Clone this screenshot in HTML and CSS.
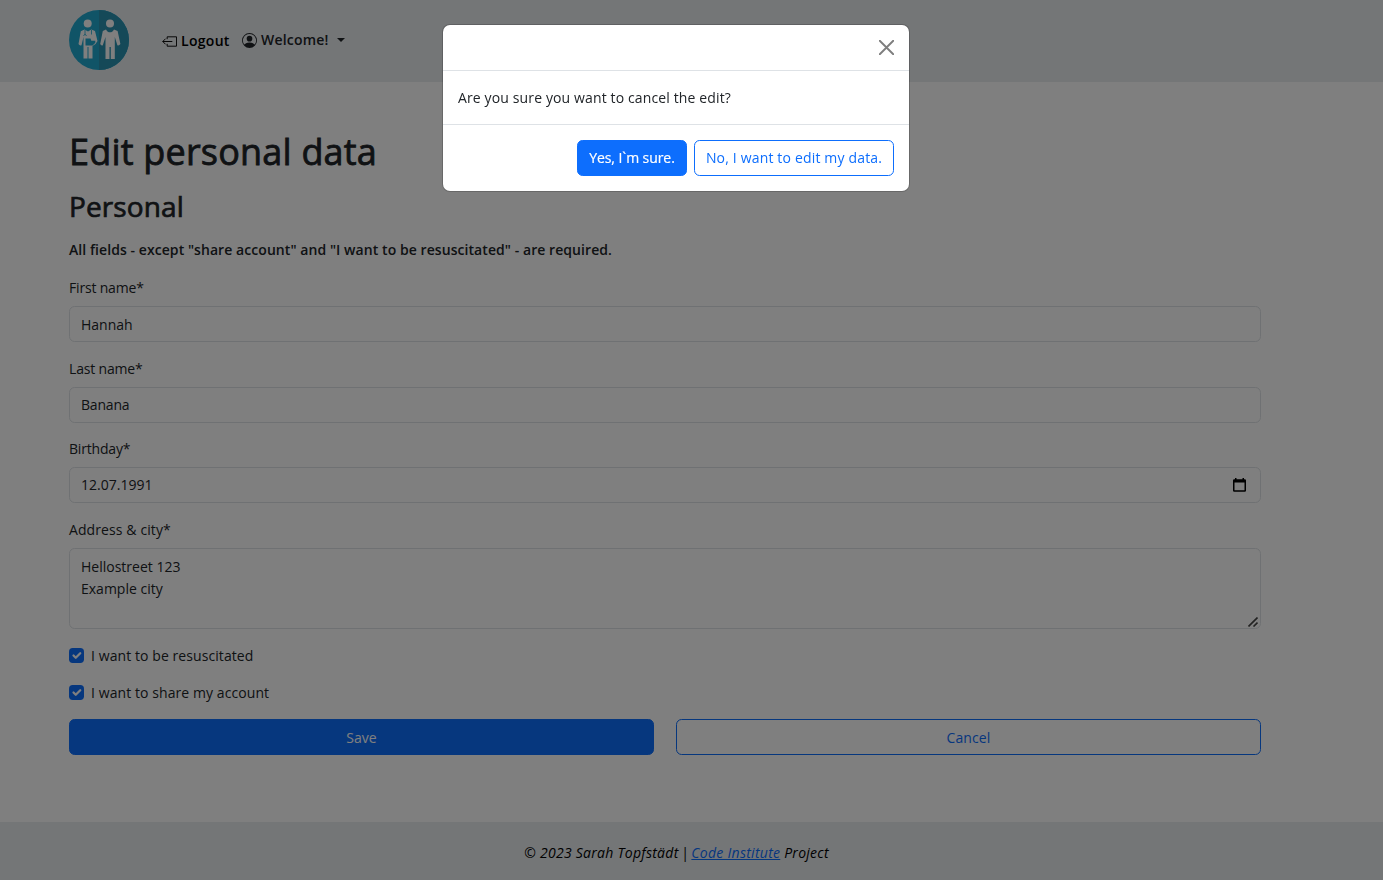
FILE: index.html
```html
<!DOCTYPE html>
<html lang="en">
<head>
<meta charset="utf-8">
<title>Edit personal data</title>
<link rel="stylesheet" href="styles.css">
</head>
<body>
<header class="navbar">
  <svg class="logo" viewBox="0 0 60 60">
    <circle cx="30" cy="30" r="30" fill="#20a8cf"/>
    <path d="M30 0a30 30 0 0 1 0 60z" fill="#2b92b1"/>
    <g fill="#fff">
      <circle cx="18.700" cy="13.500" r="4"/>
      <path d="M15.500 19.500 11.800 21.300 9.500 34q1 2 3 1.300L14.500 27v21.500h4V37h1v11.500h4V36l3-2 2-3-2.500-10-3.700-1.500-3.300 2z"/>
      <circle cx="41" cy="13.500" r="4"/>
      <path d="M37 19.500c2 3.800 6 3.800 8 0l3.600 1.600 2.800 13q-1.400 2-3 1.200L45.800 27v22h-4V37h-1.300v12h-4V27l-2.700 8.300q-1.600.8-2.600-1.200l2.600-13z"/>
    </g>
    <path d="M16.500 28.500h5l.8 2.300h4v2l-2.700 2.700h-7.100z" fill="#20a8cf"/>
    <path d="M16 20v4m-1.500 2 1.500-2 1.500 2M22.500 20v4.500" fill="none" stroke="#20a8cf" stroke-width=".8"/>
  </svg>
  <a class="nav-item logout">
    <svg class="icon" viewBox="0 0 16 16" fill="none" stroke="currentColor" stroke-width="1"><path d="M5.500 5.500V3h10v10h-10v-2.500M11 8H.8M3.800 5 .8 8l3 3"/></svg>
    <span>Logout</span>
  </a>
  <a class="nav-item welcome">
    <svg class="icon" viewBox="0 0 16 16" fill="currentColor"><path d="M11 6a3 3 0 1 1-6 0 3 3 0 0 1 6 0"/><path fill-rule="evenodd" d="M0 8a8 8 0 1 1 16 0A8 8 0 0 1 0 8m8-7a7 7 0 0 0-5.468 11.370C3.242 11.226 4.805 10 8 10s4.757 1.225 5.468 2.370A7 7 0 0 0 8 1"/></svg>
    <span>Welcome!</span>
    <span class="caret"></span>
  </a>
</header>

<main class="content">
  <h1>Edit personal data</h1>
  <h2>Personal</h2>
  <p class="note">All fields - except "share account" and "I want to be resuscitated" - are required.</p>
  <form>
    <div class="field"><label for="first">First name*</label><input class="control" id="first" value="Hannah"></div>
    <div class="field"><label for="last">Last name*</label><input class="control banana" id="last" value="Banana"></div>
    <div class="field"><label for="birthday">Birthday*</label>
      <div class="control date" id="birthday"><span>12.07.1991</span>
        <svg class="calendar" viewBox="0 0 13 14"><path d="M2 0h1.500v1.200h6V0H11v1.200h.8q1.200 0 1.200 1.200v10.200q0 1.200-1.200 1.200H1.200Q0 13.800 0 12.600V2.400q0-1.200 1.200-1.200H2zM1.500 4.500v7.800h10V4.500z" fill="#000" fill-rule="evenodd"/></svg>
      </div>
    </div>
    <div class="field"><label class="address-label" for="address">Address &amp; city*</label>
      <textarea class="control area" id="address">Hellostreet 123
Example city</textarea>
      <svg class="grip" viewBox="0 0 10 10"><path d="M.5 9.500l9-9M5.500 9.500l4-4" stroke="#444" stroke-width="1.600"/></svg>
    </div>
    <div class="check"><span class="box"><svg viewBox="0 0 20 20"><path d="m6 10 3 3 6-6" fill="none" stroke="#fff" stroke-width="3" stroke-linecap="round" stroke-linejoin="round"/></svg></span><span>I want to be resuscitated</span></div>
    <div class="check"><span class="box"><svg viewBox="0 0 20 20"><path d="m6 10 3 3 6-6" fill="none" stroke="#fff" stroke-width="3" stroke-linecap="round" stroke-linejoin="round"/></svg></span><span>I want to share my account</span></div>
    <div class="actions">
      <button type="button" class="btn primary">Save</button>
      <button type="button" class="btn outline">Cancel</button>
    </div>
  </form>
</main>

<footer class="footer"><span class="copyright">© 2023 Sarah Topfstädt</span> <span class="divider">|</span> <a>Code Institute</a> Project</footer>

<div class="backdrop">
  <section class="modal" role="dialog">
    <div class="modal-header"><svg class="close" viewBox="0 0 16 16"><path d="M.8.800l14.400 14.400M15.200.800.800 15.200" stroke="#000" stroke-width="2" stroke-linecap="round"/></svg></div>
    <div class="modal-body">Are you sure you want to cancel the edit?</div>
    <div class="modal-footer">
      <button type="button" class="btn primary yes">Yes, I`m sure.</button>
      <button type="button" class="btn outline no">No, I want to edit my data.</button>
    </div>
  </section>
</div>
</body>
</html>
```

FILE: styles.css
```css
* { box-sizing: border-box; }
body {
  margin: 0;
  height: 880px;
  overflow: hidden;
  display: flex;
  flex-direction: column;
  font-family: "Open Sans", "Noto Sans", sans-serif;
  font-size: 14px;
  line-height: 22.4px;
  color: #212529;
  background: #fff;
}
.navbar {
  height: 82px;
  flex: none;
  background: #e9ecef;
  display: flex;
  align-items: flex-start;
  padding: 10px 69px;
}
.logo { width: 60px; height: 60px; margin-right: 33px; }
.nav-item { display: flex; align-items: center; font-weight: 600; white-space: nowrap; }
.nav-item .icon { width: 15px; height: 15px; margin-right: 4px; }
.logout { color: #000; margin-top: 20px; width: 80px; letter-spacing: .3px; }
.welcome { margin-top: 19px; letter-spacing: .2px; }
.caret { margin-left: 8px; border: 4.5px solid transparent; border-top-color: currentColor; border-bottom: 0; }

.content { padding: 48px 122px 0 69px; height: 740px; flex: none; }
h1, h2 { font-weight: 400; margin: 0; }
h1 { font-size: 36px; height: 58px; line-height: 44px; letter-spacing: .2px; -webkit-text-stroke: .8px currentColor; }
h2 { font-size: 28px; height: 51px; line-height: 36px; letter-spacing: .12px; -webkit-text-stroke: .7px currentColor; }
.note { margin: 0 0 16px; font-weight: 600; letter-spacing: .065px; white-space: nowrap; }
.field { display: flex; flex-direction: column; margin-bottom: 15.8px; position: relative; }
.field label { margin-bottom: 6.5px; height: 22.4px; align-self: flex-start; letter-spacing: -.18px; }
.field .address-label { letter-spacing: .1px; }
.control {
  height: 35.8px;
  border: 1px solid #dee2e6;
  border-radius: 5.6px;
  padding: 0 11px;
  background: #fff;
  color: #212529;
  font: inherit;
  width: 100%;
  display: block;
}
.banana { letter-spacing: -.2px; }
.control.date { display: flex; align-items: center; justify-content: space-between; padding: 1px 14px 0 11px; }
.calendar { width: 13px; height: 14px; margin-bottom: 2px; }
.control.area { height: 81px; padding-top: 7px; line-height: 22px; resize: none; overflow: hidden; }
.grip { position: absolute; right: 3px; bottom: 2px; width: 10px; height: 10px; }
.check { display: flex; align-items: center; height: 22.4px; margin-bottom: 14.6px; letter-spacing: .08px; }
.field + .check { margin-top: 16.1px; }
.box { width: 15px; height: 15px; border-radius: 3.7px; background: #0d6efd; margin: 0 7px 2px 0; display: flex; }
.box svg { width: 15px; height: 15px; }
.actions { display: grid; grid-template-columns: 1fr 1fr; gap: 22px; }
.btn {
  height: 36px;
  border: 1px solid #0d6efd;
  border-radius: 5.6px;
  font: inherit;
  padding: 0;
  white-space: nowrap;
}
.actions .btn { padding-top: 2px; letter-spacing: .08px; }
.primary { background: #0d6efd; color: #fff; }
.outline { background: transparent; color: #0d6efd; }

.footer { height: 58px; flex: none; background: #e9ecef; padding: 20px 30px 0 0; text-align: center; font-style: italic; letter-spacing: .27px; color: #000; }
.divider { margin: 0 -1.5px; }
.footer a { color: #0d6efd; text-decoration: underline; }

.backdrop { position: fixed; inset: 0; background: rgba(0, 0, 0, .5); padding: 25px 0 0 443px; }
.modal { width: 466px; height: 166px; background: #fff; border-radius: 7px; box-shadow: 0 0 0 1px rgba(0, 0, 0, .18); }
.modal-header { height: 46px; border-bottom: 1px solid #dee2e6; display: flex; justify-content: flex-end; padding: 15px 15px 0 0; }
.close { width: 15px; height: 15px; opacity: .5; }
.modal-body { height: 53px; padding: 16px 15px 0; letter-spacing: .13px; }
.modal-footer { border-top: 1px solid #dee2e6; display: flex; justify-content: flex-end; gap: 7px; padding: 15px 15px 0; }
.yes { width: 110px; letter-spacing: -.07px; -webkit-text-stroke: .2px currentColor; }
.no { width: 200px; letter-spacing: .17px; }
```
